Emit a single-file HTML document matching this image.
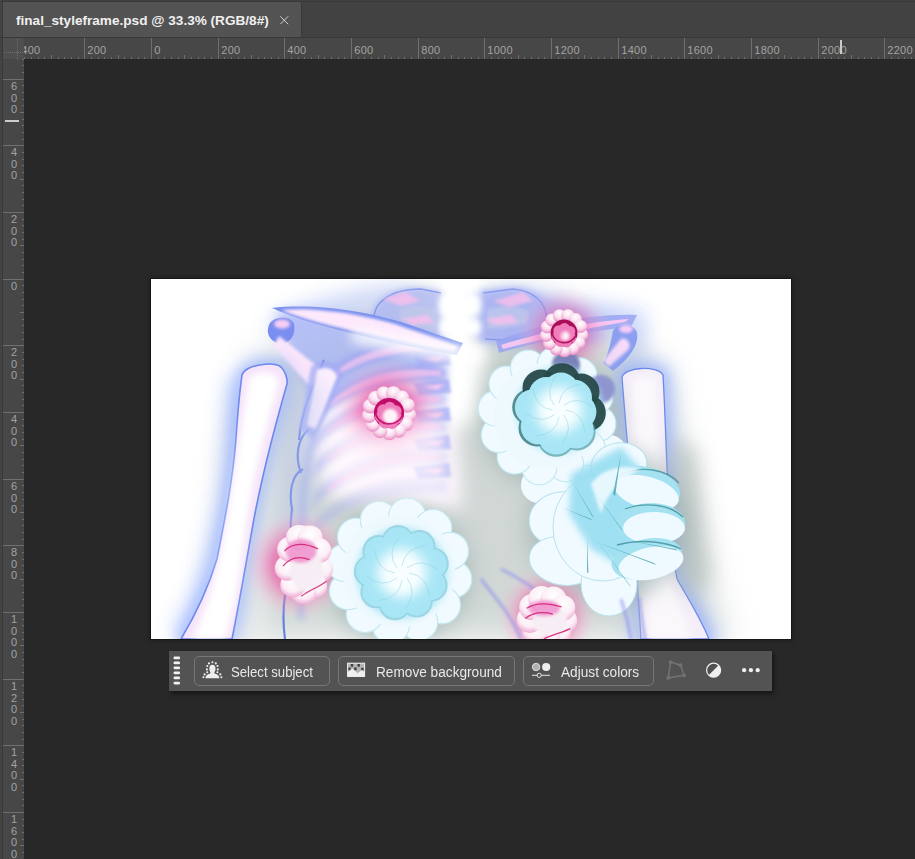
<!DOCTYPE html>
<html><head><meta charset="utf-8">
<style>
html,body{margin:0;padding:0;}
body{width:915px;height:859px;overflow:hidden;background:#282828;position:relative;font-family:"Liberation Sans",sans-serif;}
.abs{position:absolute;}
#topbar{left:0;top:0;width:915px;height:38px;background:#424242;}
#tab{left:3px;top:2px;width:298px;height:35px;background:#535353;}
#tabtitle{left:16px;top:10.5px;color:#f0f0f0;font-weight:bold;font-size:13.6px;line-height:20px;white-space:nowrap;}
#rul{left:0;top:0;}
#img{left:151px;top:279px;width:640px;height:360px;background:#fff;overflow:hidden;}
#imgborder{left:150px;top:278px;width:642px;height:362px;background:#161616;box-shadow:0 0 6px rgba(0,0,0,0.35);}
#tb{left:169px;top:651px;width:603px;height:40px;background:#535353;box-shadow:2px 3px 4px rgba(0,0,0,0.45);}
.btn{position:absolute;top:5px;height:28px;border:1px solid #767676;border-radius:5px;box-sizing:content-box;}
.btxt{position:absolute;top:6px;color:#e8e8e8;font-size:14px;line-height:16px;white-space:nowrap;transform-origin:0 0;}
</style></head><body>
<div id="topbar" class="abs"></div>
<div class="abs" style="left:0;top:1px;width:915px;height:1px;background:#393939"></div>
<div class="abs" style="left:0;top:0;width:2px;height:859px;background:#434343"></div>
<div class="abs" style="left:2px;top:0;width:1px;height:859px;background:#393939"></div>
<div id="tab" class="abs"></div>
<div class="abs" style="left:301px;top:2px;width:1px;height:35px;background:#3a3a3a"></div>
<div class="abs" style="left:0;top:37px;width:915px;height:1px;background:#393939"></div>
<div id="tabtitle" class="abs">final_styleframe.psd @ 33.3% (RGB/8#)</div>
<svg class="abs" style="left:0;top:0" width="915" height="859">
<line x1="280.3" y1="16.3" x2="288.2" y2="24.2" stroke="#d0d0d0" stroke-width="1"/>
<line x1="288.2" y1="16.3" x2="280.3" y2="24.2" stroke="#d0d0d0" stroke-width="1"/>
<rect x="3" y="38" width="912" height="21" fill="#474747"/>
<rect x="3" y="59" width="21" height="800" fill="#474747"/>
<g font-family="Liberation Sans" font-size="11px">
<rect x="24" y="57" width="1" height="2" fill="#6f6f6f"/>
<rect x="31" y="57" width="1" height="2" fill="#6f6f6f"/>
<rect x="38" y="57" width="1" height="2" fill="#6f6f6f"/>
<rect x="44" y="57" width="1" height="2" fill="#6f6f6f"/>
<rect x="51" y="55" width="1" height="4" fill="#6f6f6f"/>
<rect x="58" y="57" width="1" height="2" fill="#6f6f6f"/>
<rect x="64" y="57" width="1" height="2" fill="#6f6f6f"/>
<rect x="71" y="57" width="1" height="2" fill="#6f6f6f"/>
<rect x="78" y="57" width="1" height="2" fill="#6f6f6f"/>
<rect x="84" y="38" width="1" height="21" fill="#6f6f6f"/>
<rect x="91" y="57" width="1" height="2" fill="#6f6f6f"/>
<rect x="98" y="57" width="1" height="2" fill="#6f6f6f"/>
<rect x="104" y="57" width="1" height="2" fill="#6f6f6f"/>
<rect x="111" y="57" width="1" height="2" fill="#6f6f6f"/>
<rect x="118" y="55" width="1" height="4" fill="#6f6f6f"/>
<rect x="124" y="57" width="1" height="2" fill="#6f6f6f"/>
<rect x="131" y="57" width="1" height="2" fill="#6f6f6f"/>
<rect x="138" y="57" width="1" height="2" fill="#6f6f6f"/>
<rect x="144" y="57" width="1" height="2" fill="#6f6f6f"/>
<rect x="151" y="38" width="1" height="21" fill="#6f6f6f"/>
<rect x="158" y="57" width="1" height="2" fill="#6f6f6f"/>
<rect x="164" y="57" width="1" height="2" fill="#6f6f6f"/>
<rect x="171" y="57" width="1" height="2" fill="#6f6f6f"/>
<rect x="178" y="57" width="1" height="2" fill="#6f6f6f"/>
<rect x="184" y="55" width="1" height="4" fill="#6f6f6f"/>
<rect x="191" y="57" width="1" height="2" fill="#6f6f6f"/>
<rect x="198" y="57" width="1" height="2" fill="#6f6f6f"/>
<rect x="204" y="57" width="1" height="2" fill="#6f6f6f"/>
<rect x="211" y="57" width="1" height="2" fill="#6f6f6f"/>
<rect x="218" y="38" width="1" height="21" fill="#6f6f6f"/>
<rect x="224" y="57" width="1" height="2" fill="#6f6f6f"/>
<rect x="231" y="57" width="1" height="2" fill="#6f6f6f"/>
<rect x="238" y="57" width="1" height="2" fill="#6f6f6f"/>
<rect x="244" y="57" width="1" height="2" fill="#6f6f6f"/>
<rect x="251" y="55" width="1" height="4" fill="#6f6f6f"/>
<rect x="258" y="57" width="1" height="2" fill="#6f6f6f"/>
<rect x="264" y="57" width="1" height="2" fill="#6f6f6f"/>
<rect x="271" y="57" width="1" height="2" fill="#6f6f6f"/>
<rect x="278" y="57" width="1" height="2" fill="#6f6f6f"/>
<rect x="284" y="38" width="1" height="21" fill="#6f6f6f"/>
<rect x="291" y="57" width="1" height="2" fill="#6f6f6f"/>
<rect x="298" y="57" width="1" height="2" fill="#6f6f6f"/>
<rect x="304" y="57" width="1" height="2" fill="#6f6f6f"/>
<rect x="311" y="57" width="1" height="2" fill="#6f6f6f"/>
<rect x="318" y="55" width="1" height="4" fill="#6f6f6f"/>
<rect x="324" y="57" width="1" height="2" fill="#6f6f6f"/>
<rect x="331" y="57" width="1" height="2" fill="#6f6f6f"/>
<rect x="338" y="57" width="1" height="2" fill="#6f6f6f"/>
<rect x="344" y="57" width="1" height="2" fill="#6f6f6f"/>
<rect x="351" y="38" width="1" height="21" fill="#6f6f6f"/>
<rect x="358" y="57" width="1" height="2" fill="#6f6f6f"/>
<rect x="364" y="57" width="1" height="2" fill="#6f6f6f"/>
<rect x="371" y="57" width="1" height="2" fill="#6f6f6f"/>
<rect x="378" y="57" width="1" height="2" fill="#6f6f6f"/>
<rect x="384" y="55" width="1" height="4" fill="#6f6f6f"/>
<rect x="391" y="57" width="1" height="2" fill="#6f6f6f"/>
<rect x="398" y="57" width="1" height="2" fill="#6f6f6f"/>
<rect x="404" y="57" width="1" height="2" fill="#6f6f6f"/>
<rect x="411" y="57" width="1" height="2" fill="#6f6f6f"/>
<rect x="418" y="38" width="1" height="21" fill="#6f6f6f"/>
<rect x="424" y="57" width="1" height="2" fill="#6f6f6f"/>
<rect x="431" y="57" width="1" height="2" fill="#6f6f6f"/>
<rect x="438" y="57" width="1" height="2" fill="#6f6f6f"/>
<rect x="444" y="57" width="1" height="2" fill="#6f6f6f"/>
<rect x="451" y="55" width="1" height="4" fill="#6f6f6f"/>
<rect x="458" y="57" width="1" height="2" fill="#6f6f6f"/>
<rect x="464" y="57" width="1" height="2" fill="#6f6f6f"/>
<rect x="471" y="57" width="1" height="2" fill="#6f6f6f"/>
<rect x="478" y="57" width="1" height="2" fill="#6f6f6f"/>
<rect x="484" y="38" width="1" height="21" fill="#6f6f6f"/>
<rect x="491" y="57" width="1" height="2" fill="#6f6f6f"/>
<rect x="498" y="57" width="1" height="2" fill="#6f6f6f"/>
<rect x="504" y="57" width="1" height="2" fill="#6f6f6f"/>
<rect x="511" y="57" width="1" height="2" fill="#6f6f6f"/>
<rect x="518" y="55" width="1" height="4" fill="#6f6f6f"/>
<rect x="524" y="57" width="1" height="2" fill="#6f6f6f"/>
<rect x="531" y="57" width="1" height="2" fill="#6f6f6f"/>
<rect x="538" y="57" width="1" height="2" fill="#6f6f6f"/>
<rect x="544" y="57" width="1" height="2" fill="#6f6f6f"/>
<rect x="551" y="38" width="1" height="21" fill="#6f6f6f"/>
<rect x="558" y="57" width="1" height="2" fill="#6f6f6f"/>
<rect x="564" y="57" width="1" height="2" fill="#6f6f6f"/>
<rect x="571" y="57" width="1" height="2" fill="#6f6f6f"/>
<rect x="578" y="57" width="1" height="2" fill="#6f6f6f"/>
<rect x="584" y="55" width="1" height="4" fill="#6f6f6f"/>
<rect x="591" y="57" width="1" height="2" fill="#6f6f6f"/>
<rect x="598" y="57" width="1" height="2" fill="#6f6f6f"/>
<rect x="604" y="57" width="1" height="2" fill="#6f6f6f"/>
<rect x="611" y="57" width="1" height="2" fill="#6f6f6f"/>
<rect x="618" y="38" width="1" height="21" fill="#6f6f6f"/>
<rect x="624" y="57" width="1" height="2" fill="#6f6f6f"/>
<rect x="631" y="57" width="1" height="2" fill="#6f6f6f"/>
<rect x="638" y="57" width="1" height="2" fill="#6f6f6f"/>
<rect x="644" y="57" width="1" height="2" fill="#6f6f6f"/>
<rect x="651" y="55" width="1" height="4" fill="#6f6f6f"/>
<rect x="658" y="57" width="1" height="2" fill="#6f6f6f"/>
<rect x="664" y="57" width="1" height="2" fill="#6f6f6f"/>
<rect x="671" y="57" width="1" height="2" fill="#6f6f6f"/>
<rect x="678" y="57" width="1" height="2" fill="#6f6f6f"/>
<rect x="684" y="38" width="1" height="21" fill="#6f6f6f"/>
<rect x="691" y="57" width="1" height="2" fill="#6f6f6f"/>
<rect x="698" y="57" width="1" height="2" fill="#6f6f6f"/>
<rect x="704" y="57" width="1" height="2" fill="#6f6f6f"/>
<rect x="711" y="57" width="1" height="2" fill="#6f6f6f"/>
<rect x="718" y="55" width="1" height="4" fill="#6f6f6f"/>
<rect x="724" y="57" width="1" height="2" fill="#6f6f6f"/>
<rect x="731" y="57" width="1" height="2" fill="#6f6f6f"/>
<rect x="738" y="57" width="1" height="2" fill="#6f6f6f"/>
<rect x="744" y="57" width="1" height="2" fill="#6f6f6f"/>
<rect x="751" y="38" width="1" height="21" fill="#6f6f6f"/>
<rect x="758" y="57" width="1" height="2" fill="#6f6f6f"/>
<rect x="764" y="57" width="1" height="2" fill="#6f6f6f"/>
<rect x="771" y="57" width="1" height="2" fill="#6f6f6f"/>
<rect x="778" y="57" width="1" height="2" fill="#6f6f6f"/>
<rect x="784" y="55" width="1" height="4" fill="#6f6f6f"/>
<rect x="791" y="57" width="1" height="2" fill="#6f6f6f"/>
<rect x="798" y="57" width="1" height="2" fill="#6f6f6f"/>
<rect x="804" y="57" width="1" height="2" fill="#6f6f6f"/>
<rect x="811" y="57" width="1" height="2" fill="#6f6f6f"/>
<rect x="818" y="38" width="1" height="21" fill="#6f6f6f"/>
<rect x="824" y="57" width="1" height="2" fill="#6f6f6f"/>
<rect x="831" y="57" width="1" height="2" fill="#6f6f6f"/>
<rect x="838" y="57" width="1" height="2" fill="#6f6f6f"/>
<rect x="844" y="57" width="1" height="2" fill="#6f6f6f"/>
<rect x="851" y="55" width="1" height="4" fill="#6f6f6f"/>
<rect x="858" y="57" width="1" height="2" fill="#6f6f6f"/>
<rect x="864" y="57" width="1" height="2" fill="#6f6f6f"/>
<rect x="871" y="57" width="1" height="2" fill="#6f6f6f"/>
<rect x="878" y="57" width="1" height="2" fill="#6f6f6f"/>
<rect x="884" y="38" width="1" height="21" fill="#6f6f6f"/>
<rect x="891" y="57" width="1" height="2" fill="#6f6f6f"/>
<rect x="898" y="57" width="1" height="2" fill="#6f6f6f"/>
<rect x="904" y="57" width="1" height="2" fill="#6f6f6f"/>
<rect x="911" y="57" width="1" height="2" fill="#6f6f6f"/>
<text x="-112.8" y="54" fill="#a3a3a3" letter-spacing="0.35">800</text>
<text x="-45.8" y="54" fill="#a3a3a3" letter-spacing="0.35">600</text>
<text x="21.2" y="54" fill="#a3a3a3" letter-spacing="0.35">400</text>
<text x="87.2" y="54" fill="#a3a3a3" letter-spacing="0.35">200</text>
<text x="154.2" y="54" fill="#a3a3a3" letter-spacing="0.35">0</text>
<text x="221.2" y="54" fill="#a3a3a3" letter-spacing="0.35">200</text>
<text x="287.2" y="54" fill="#a3a3a3" letter-spacing="0.35">400</text>
<text x="354.2" y="54" fill="#a3a3a3" letter-spacing="0.35">600</text>
<text x="421.2" y="54" fill="#a3a3a3" letter-spacing="0.35">800</text>
<text x="487.2" y="54" fill="#a3a3a3" letter-spacing="0.35">1000</text>
<text x="554.2" y="54" fill="#a3a3a3" letter-spacing="0.35">1200</text>
<text x="621.2" y="54" fill="#a3a3a3" letter-spacing="0.35">1400</text>
<text x="687.2" y="54" fill="#a3a3a3" letter-spacing="0.35">1600</text>
<text x="754.2" y="54" fill="#a3a3a3" letter-spacing="0.35">1800</text>
<text x="821.2" y="54" fill="#a3a3a3" letter-spacing="0.35">2000</text>
<text x="887.2" y="54" fill="#a3a3a3" letter-spacing="0.35">2200</text>
<rect x="3" y="38" width="21" height="21" fill="#474747"/>

<rect x="3" y="38" width="21" height="21" fill="#4f4f4f"/>
<rect x="4" y="52" width="1" height="1" fill="#6e6e6e"/><rect x="17" y="39" width="1" height="1" fill="#6e6e6e"/><rect x="6" y="52" width="1" height="1" fill="#6e6e6e"/><rect x="17" y="41" width="1" height="1" fill="#6e6e6e"/><rect x="8" y="52" width="1" height="1" fill="#6e6e6e"/><rect x="17" y="43" width="1" height="1" fill="#6e6e6e"/><rect x="10" y="52" width="1" height="1" fill="#6e6e6e"/><rect x="17" y="45" width="1" height="1" fill="#6e6e6e"/><rect x="12" y="52" width="1" height="1" fill="#6e6e6e"/><rect x="17" y="47" width="1" height="1" fill="#6e6e6e"/><rect x="14" y="52" width="1" height="1" fill="#6e6e6e"/><rect x="17" y="49" width="1" height="1" fill="#6e6e6e"/><rect x="16" y="52" width="1" height="1" fill="#6e6e6e"/><rect x="17" y="51" width="1" height="1" fill="#6e6e6e"/><rect x="18" y="52" width="1" height="1" fill="#6e6e6e"/><rect x="17" y="53" width="1" height="1" fill="#6e6e6e"/><rect x="20" y="52" width="1" height="1" fill="#6e6e6e"/><rect x="17" y="55" width="1" height="1" fill="#6e6e6e"/><rect x="22" y="52" width="1" height="1" fill="#6e6e6e"/><rect x="17" y="57" width="1" height="1" fill="#6e6e6e"/><rect x="24" y="52" width="1" height="1" fill="#6e6e6e"/><rect x="17" y="59" width="1" height="1" fill="#6e6e6e"/>
<rect x="22" y="59" width="2" height="1" fill="#6f6f6f"/>
<rect x="22" y="65" width="2" height="1" fill="#6f6f6f"/>
<rect x="22" y="72" width="2" height="1" fill="#6f6f6f"/>
<rect x="3" y="79" width="21" height="1" fill="#6f6f6f"/>
<rect x="22" y="85" width="2" height="1" fill="#6f6f6f"/>
<rect x="22" y="92" width="2" height="1" fill="#6f6f6f"/>
<rect x="22" y="99" width="2" height="1" fill="#6f6f6f"/>
<rect x="22" y="105" width="2" height="1" fill="#6f6f6f"/>
<rect x="20" y="112" width="4" height="1" fill="#6f6f6f"/>
<rect x="22" y="119" width="2" height="1" fill="#6f6f6f"/>
<rect x="22" y="125" width="2" height="1" fill="#6f6f6f"/>
<rect x="22" y="132" width="2" height="1" fill="#6f6f6f"/>
<rect x="22" y="139" width="2" height="1" fill="#6f6f6f"/>
<rect x="3" y="145" width="21" height="1" fill="#6f6f6f"/>
<rect x="22" y="152" width="2" height="1" fill="#6f6f6f"/>
<rect x="22" y="159" width="2" height="1" fill="#6f6f6f"/>
<rect x="22" y="165" width="2" height="1" fill="#6f6f6f"/>
<rect x="22" y="172" width="2" height="1" fill="#6f6f6f"/>
<rect x="20" y="179" width="4" height="1" fill="#6f6f6f"/>
<rect x="22" y="185" width="2" height="1" fill="#6f6f6f"/>
<rect x="22" y="192" width="2" height="1" fill="#6f6f6f"/>
<rect x="22" y="199" width="2" height="1" fill="#6f6f6f"/>
<rect x="22" y="205" width="2" height="1" fill="#6f6f6f"/>
<rect x="3" y="212" width="21" height="1" fill="#6f6f6f"/>
<rect x="22" y="219" width="2" height="1" fill="#6f6f6f"/>
<rect x="22" y="225" width="2" height="1" fill="#6f6f6f"/>
<rect x="22" y="232" width="2" height="1" fill="#6f6f6f"/>
<rect x="22" y="239" width="2" height="1" fill="#6f6f6f"/>
<rect x="20" y="245" width="4" height="1" fill="#6f6f6f"/>
<rect x="22" y="252" width="2" height="1" fill="#6f6f6f"/>
<rect x="22" y="259" width="2" height="1" fill="#6f6f6f"/>
<rect x="22" y="265" width="2" height="1" fill="#6f6f6f"/>
<rect x="22" y="272" width="2" height="1" fill="#6f6f6f"/>
<rect x="3" y="279" width="21" height="1" fill="#6f6f6f"/>
<rect x="22" y="285" width="2" height="1" fill="#6f6f6f"/>
<rect x="22" y="292" width="2" height="1" fill="#6f6f6f"/>
<rect x="22" y="299" width="2" height="1" fill="#6f6f6f"/>
<rect x="22" y="305" width="2" height="1" fill="#6f6f6f"/>
<rect x="20" y="312" width="4" height="1" fill="#6f6f6f"/>
<rect x="22" y="319" width="2" height="1" fill="#6f6f6f"/>
<rect x="22" y="325" width="2" height="1" fill="#6f6f6f"/>
<rect x="22" y="332" width="2" height="1" fill="#6f6f6f"/>
<rect x="22" y="339" width="2" height="1" fill="#6f6f6f"/>
<rect x="3" y="345" width="21" height="1" fill="#6f6f6f"/>
<rect x="22" y="352" width="2" height="1" fill="#6f6f6f"/>
<rect x="22" y="359" width="2" height="1" fill="#6f6f6f"/>
<rect x="22" y="365" width="2" height="1" fill="#6f6f6f"/>
<rect x="22" y="372" width="2" height="1" fill="#6f6f6f"/>
<rect x="20" y="379" width="4" height="1" fill="#6f6f6f"/>
<rect x="22" y="385" width="2" height="1" fill="#6f6f6f"/>
<rect x="22" y="392" width="2" height="1" fill="#6f6f6f"/>
<rect x="22" y="399" width="2" height="1" fill="#6f6f6f"/>
<rect x="22" y="405" width="2" height="1" fill="#6f6f6f"/>
<rect x="3" y="412" width="21" height="1" fill="#6f6f6f"/>
<rect x="22" y="419" width="2" height="1" fill="#6f6f6f"/>
<rect x="22" y="425" width="2" height="1" fill="#6f6f6f"/>
<rect x="22" y="432" width="2" height="1" fill="#6f6f6f"/>
<rect x="22" y="439" width="2" height="1" fill="#6f6f6f"/>
<rect x="20" y="445" width="4" height="1" fill="#6f6f6f"/>
<rect x="22" y="452" width="2" height="1" fill="#6f6f6f"/>
<rect x="22" y="459" width="2" height="1" fill="#6f6f6f"/>
<rect x="22" y="465" width="2" height="1" fill="#6f6f6f"/>
<rect x="22" y="472" width="2" height="1" fill="#6f6f6f"/>
<rect x="3" y="479" width="21" height="1" fill="#6f6f6f"/>
<rect x="22" y="485" width="2" height="1" fill="#6f6f6f"/>
<rect x="22" y="492" width="2" height="1" fill="#6f6f6f"/>
<rect x="22" y="499" width="2" height="1" fill="#6f6f6f"/>
<rect x="22" y="505" width="2" height="1" fill="#6f6f6f"/>
<rect x="20" y="512" width="4" height="1" fill="#6f6f6f"/>
<rect x="22" y="519" width="2" height="1" fill="#6f6f6f"/>
<rect x="22" y="525" width="2" height="1" fill="#6f6f6f"/>
<rect x="22" y="532" width="2" height="1" fill="#6f6f6f"/>
<rect x="22" y="539" width="2" height="1" fill="#6f6f6f"/>
<rect x="3" y="545" width="21" height="1" fill="#6f6f6f"/>
<rect x="22" y="552" width="2" height="1" fill="#6f6f6f"/>
<rect x="22" y="559" width="2" height="1" fill="#6f6f6f"/>
<rect x="22" y="565" width="2" height="1" fill="#6f6f6f"/>
<rect x="22" y="572" width="2" height="1" fill="#6f6f6f"/>
<rect x="20" y="579" width="4" height="1" fill="#6f6f6f"/>
<rect x="22" y="585" width="2" height="1" fill="#6f6f6f"/>
<rect x="22" y="592" width="2" height="1" fill="#6f6f6f"/>
<rect x="22" y="599" width="2" height="1" fill="#6f6f6f"/>
<rect x="22" y="605" width="2" height="1" fill="#6f6f6f"/>
<rect x="3" y="612" width="21" height="1" fill="#6f6f6f"/>
<rect x="22" y="619" width="2" height="1" fill="#6f6f6f"/>
<rect x="22" y="625" width="2" height="1" fill="#6f6f6f"/>
<rect x="22" y="632" width="2" height="1" fill="#6f6f6f"/>
<rect x="22" y="639" width="2" height="1" fill="#6f6f6f"/>
<rect x="20" y="645" width="4" height="1" fill="#6f6f6f"/>
<rect x="22" y="652" width="2" height="1" fill="#6f6f6f"/>
<rect x="22" y="659" width="2" height="1" fill="#6f6f6f"/>
<rect x="22" y="665" width="2" height="1" fill="#6f6f6f"/>
<rect x="22" y="672" width="2" height="1" fill="#6f6f6f"/>
<rect x="3" y="679" width="21" height="1" fill="#6f6f6f"/>
<rect x="22" y="685" width="2" height="1" fill="#6f6f6f"/>
<rect x="22" y="692" width="2" height="1" fill="#6f6f6f"/>
<rect x="22" y="699" width="2" height="1" fill="#6f6f6f"/>
<rect x="22" y="705" width="2" height="1" fill="#6f6f6f"/>
<rect x="20" y="712" width="4" height="1" fill="#6f6f6f"/>
<rect x="22" y="719" width="2" height="1" fill="#6f6f6f"/>
<rect x="22" y="725" width="2" height="1" fill="#6f6f6f"/>
<rect x="22" y="732" width="2" height="1" fill="#6f6f6f"/>
<rect x="22" y="739" width="2" height="1" fill="#6f6f6f"/>
<rect x="3" y="745" width="21" height="1" fill="#6f6f6f"/>
<rect x="22" y="752" width="2" height="1" fill="#6f6f6f"/>
<rect x="22" y="759" width="2" height="1" fill="#6f6f6f"/>
<rect x="22" y="765" width="2" height="1" fill="#6f6f6f"/>
<rect x="22" y="772" width="2" height="1" fill="#6f6f6f"/>
<rect x="20" y="779" width="4" height="1" fill="#6f6f6f"/>
<rect x="22" y="785" width="2" height="1" fill="#6f6f6f"/>
<rect x="22" y="792" width="2" height="1" fill="#6f6f6f"/>
<rect x="22" y="799" width="2" height="1" fill="#6f6f6f"/>
<rect x="22" y="805" width="2" height="1" fill="#6f6f6f"/>
<rect x="3" y="812" width="21" height="1" fill="#6f6f6f"/>
<rect x="22" y="819" width="2" height="1" fill="#6f6f6f"/>
<rect x="22" y="825" width="2" height="1" fill="#6f6f6f"/>
<rect x="22" y="832" width="2" height="1" fill="#6f6f6f"/>
<rect x="22" y="839" width="2" height="1" fill="#6f6f6f"/>
<rect x="20" y="845" width="4" height="1" fill="#6f6f6f"/>
<rect x="22" y="852" width="2" height="1" fill="#6f6f6f"/>
<rect x="22" y="859" width="2" height="1" fill="#6f6f6f"/>
<text x="14" y="90.0" fill="#a3a3a3" text-anchor="middle">6</text>
<text x="14" y="101.6" fill="#a3a3a3" text-anchor="middle">0</text>
<text x="14" y="113.2" fill="#a3a3a3" text-anchor="middle">0</text>
<text x="14" y="156.0" fill="#a3a3a3" text-anchor="middle">4</text>
<text x="14" y="167.6" fill="#a3a3a3" text-anchor="middle">0</text>
<text x="14" y="179.2" fill="#a3a3a3" text-anchor="middle">0</text>
<text x="14" y="223.0" fill="#a3a3a3" text-anchor="middle">2</text>
<text x="14" y="234.6" fill="#a3a3a3" text-anchor="middle">0</text>
<text x="14" y="246.2" fill="#a3a3a3" text-anchor="middle">0</text>
<text x="14" y="290.0" fill="#a3a3a3" text-anchor="middle">0</text>
<text x="14" y="356.0" fill="#a3a3a3" text-anchor="middle">2</text>
<text x="14" y="367.6" fill="#a3a3a3" text-anchor="middle">0</text>
<text x="14" y="379.2" fill="#a3a3a3" text-anchor="middle">0</text>
<text x="14" y="423.0" fill="#a3a3a3" text-anchor="middle">4</text>
<text x="14" y="434.6" fill="#a3a3a3" text-anchor="middle">0</text>
<text x="14" y="446.2" fill="#a3a3a3" text-anchor="middle">0</text>
<text x="14" y="490.0" fill="#a3a3a3" text-anchor="middle">6</text>
<text x="14" y="501.6" fill="#a3a3a3" text-anchor="middle">0</text>
<text x="14" y="513.2" fill="#a3a3a3" text-anchor="middle">0</text>
<text x="14" y="556.0" fill="#a3a3a3" text-anchor="middle">8</text>
<text x="14" y="567.6" fill="#a3a3a3" text-anchor="middle">0</text>
<text x="14" y="579.2" fill="#a3a3a3" text-anchor="middle">0</text>
<text x="14" y="623.0" fill="#a3a3a3" text-anchor="middle">1</text>
<text x="14" y="634.6" fill="#a3a3a3" text-anchor="middle">0</text>
<text x="14" y="646.2" fill="#a3a3a3" text-anchor="middle">0</text>
<text x="14" y="657.8" fill="#a3a3a3" text-anchor="middle">0</text>
<text x="14" y="690.0" fill="#a3a3a3" text-anchor="middle">1</text>
<text x="14" y="701.6" fill="#a3a3a3" text-anchor="middle">2</text>
<text x="14" y="713.2" fill="#a3a3a3" text-anchor="middle">0</text>
<text x="14" y="724.8" fill="#a3a3a3" text-anchor="middle">0</text>
<text x="14" y="756.0" fill="#a3a3a3" text-anchor="middle">1</text>
<text x="14" y="767.6" fill="#a3a3a3" text-anchor="middle">4</text>
<text x="14" y="779.2" fill="#a3a3a3" text-anchor="middle">0</text>
<text x="14" y="790.8" fill="#a3a3a3" text-anchor="middle">0</text>
<text x="14" y="823.0" fill="#a3a3a3" text-anchor="middle">1</text>
<text x="14" y="834.6" fill="#a3a3a3" text-anchor="middle">6</text>
<text x="14" y="846.2" fill="#a3a3a3" text-anchor="middle">0</text>
<text x="14" y="857.8" fill="#a3a3a3" text-anchor="middle">0</text>
<text x="14" y="890.0" fill="#a3a3a3" text-anchor="middle">1</text>
<text x="14" y="901.6" fill="#a3a3a3" text-anchor="middle">8</text>
<text x="14" y="913.2" fill="#a3a3a3" text-anchor="middle">0</text>
<text x="14" y="924.8" fill="#a3a3a3" text-anchor="middle">0</text>
</g>
<rect x="840" y="40" width="2" height="14" fill="#cacaca"/>
<rect x="5" y="120" width="14" height="2" fill="#cccccc"/>
</svg>
<div id="imgborder" class="abs"></div>
<div id="img" class="abs"><svg width="640" height="360" viewBox="0 0 640 360">
<defs>
<filter id="b30" x="-50%" y="-50%" width="200%" height="200%"><feGaussianBlur stdDeviation="18"/></filter>
<filter id="b12" x="-50%" y="-50%" width="200%" height="200%"><feGaussianBlur stdDeviation="10"/></filter>
<filter id="b6" x="-50%" y="-50%" width="200%" height="200%"><feGaussianBlur stdDeviation="6"/></filter>
<filter id="b3" x="-50%" y="-50%" width="200%" height="200%"><feGaussianBlur stdDeviation="3"/></filter>
<filter id="b2" x="-50%" y="-50%" width="200%" height="200%"><feGaussianBlur stdDeviation="1.6"/></filter>
<filter id="b1" x="-50%" y="-50%" width="200%" height="200%"><feGaussianBlur stdDeviation="0.6"/></filter>
<radialGradient id="gPinkGlow" cx="50%" cy="50%" r="50%">
<stop offset="0" stop-color="#e8207e" stop-opacity="1"/>
<stop offset="0.5" stop-color="#f060a8" stop-opacity="0.75"/>
<stop offset="0.8" stop-color="#f8a0cc" stop-opacity="0.3"/>
<stop offset="1" stop-color="#ffc0e0" stop-opacity="0"/>
</radialGradient>
<radialGradient id="flC" cx="50%" cy="50%" r="50%">
<stop offset="0" stop-color="#f6fdff"/>
<stop offset="0.3" stop-color="#eefaff"/>
<stop offset="0.5" stop-color="#bfeaf6"/>
<stop offset="0.7" stop-color="#a6e2f2"/>
<stop offset="1" stop-color="#c8eef8"/>
</radialGradient>
<radialGradient id="petalP" cx="50%" cy="30%" r="75%">
<stop offset="0" stop-color="#ffffff"/>
<stop offset="0.5" stop-color="#fadcee"/>
<stop offset="1" stop-color="#e47cba"/>
</radialGradient>
<radialGradient id="petalW2" cx="50%" cy="35%" r="70%">
<stop offset="0" stop-color="#ffffff"/>
<stop offset="0.6" stop-color="#fbeef6"/>
<stop offset="1" stop-color="#ec9ccc"/>
</radialGradient>
<radialGradient id="centerP" cx="50%" cy="50%" r="50%">
<stop offset="0" stop-color="#fff4fa"/>
<stop offset="0.3" stop-color="#f7a8d0"/>
<stop offset="0.7" stop-color="#c81870"/>
<stop offset="1" stop-color="#e870a8"/>
</radialGradient>
</defs>
<rect width="640" height="360" fill="#ffffff"/>
<g filter="url(#b30)" fill="#b4c0bc" opacity="0.62">
<path d="M70 360 L86 150 L115 80 L200 30 L300 10 L400 22 L470 55 L512 100 L538 230 L562 330 L578 360 Z"/>
</g>
<g filter="url(#b12)">
<path d="M165 110 L300 90 L312 230 L240 228 L175 215 L158 170 Z" fill="#fdf6fd"/>
<path d="M284 -10 L332 -10 L330 140 L305 150 L286 140 Z" fill="#ffffff"/>
<path d="M60 0 L640 0 L640 14 L440 22 L330 6 L270 10 L120 30 L60 30 Z" fill="#ffffff" opacity="0.6"/>
<path d="M95 95 L135 95 L118 360 L40 360 Z" fill="#ffffff" opacity="0.4"/>
</g>
<g filter="url(#b12)" fill="none" stroke="#8aa4ff" stroke-width="16" opacity="0.45">
<path d="M122 50 C150 32 210 18 260 16"/>
<path d="M350 18 C400 22 455 35 482 60"/>
</g>
<g filter="url(#b6)" opacity="0.8">
<path d="M125 35 C170 28 230 35 290 55 L292 105 C250 100 200 110 170 130 C150 110 135 70 125 35 Z" fill="#a8b6f6"/>
<path d="M320 15 C360 10 410 20 440 36 L455 60 L420 72 C380 70 350 65 325 60 Z" fill="#a0aef2"/>
</g>
<g filter="url(#b12)" fill="none" stroke="#8aa6ff" stroke-width="12" opacity="0.45"><path d="M440 34 L486 36 L488 60 L470 84"/></g>
<g filter="url(#b3)" opacity="0.75">
<path d="M222 50 C214 26 236 8 270 8 L292 12 L290 60 L285 70 C256 68 230 64 222 50 Z" fill="#aab4f2"/>
<path d="M330 12 L364 8 C392 10 404 30 398 52 C386 62 360 64 330 62 Z" fill="#aab4f2"/>
</g>
<g filter="url(#b1)" fill="none" stroke="#7c90ee" stroke-width="1.6" opacity="0.8">
<path d="M284 68 C256 66 230 62 224 48 C218 25 238 10 270 10 L290 14"/>
<path d="M332 14 L362 10 C388 12 400 30 394 50 C382 60 360 62 334 60"/>
</g>
<g filter="url(#b2)" opacity="0.6">
<path d="M248 32 C255 26 272 26 286 30 L284 52 C270 50 255 46 248 40 Z" fill="#c4cce8"/>
<path d="M336 30 C350 26 368 26 378 32 L376 44 C364 48 350 50 336 50 Z" fill="#c4cce8"/>
</g>
<g filter="url(#b2)" opacity="0.85">
<path d="M232 20 L254 13 L270 22 L250 27 Z" fill="#f4c0ec"/>
<path d="M342 22 L372 13 L382 22 L358 28 Z" fill="#f4c0ec"/>
<path d="M250 40 L276 36 L284 44 L262 46 Z" fill="#f4c0ec"/>
<path d="M334 40 L360 36 L368 44 L344 46 Z" fill="#f4c0ec"/>
</g>
<g filter="url(#b3)" fill="#ffffff">
<rect x="290" y="-8" width="38" height="20" rx="6"/>
<rect x="288" y="15" width="42" height="22" rx="7"/>
<rect x="288" y="40" width="42" height="16" rx="6"/>
</g>
<g filter="url(#b3)">
<path d="M296 62 C250 54 200 67 165 102 L160 120 C190 88 240 72 296 76 Z" fill="#9ca2f0" opacity="0.7"/>
<path d="M296 88 C250 80 200 93 165 128 L160 146 C190 114 240 98 296 102 Z" fill="#9ca2f0" opacity="0.65"/>
<path d="M296 114 C250 106 200 119 165 154 L160 172 C190 140 240 124 296 128 Z" fill="#9ca2f0" opacity="0.5"/>
<path d="M296 142 C250 134 200 147 165 182 L160 200 C190 168 240 152 296 156 Z" fill="#9ca2f0" opacity="0.45"/>
<path d="M296 172 C250 164 200 177 165 212 L160 230 C190 198 240 182 296 186 Z" fill="#9ca2f0" opacity="0.4"/>
<path d="M296 200 C250 192 200 205 165 240 L160 258 C190 226 240 210 296 214 Z" fill="#9ca2f0" opacity="0.35"/>
</g>
<g filter="url(#b2)" opacity="0.75">
<path d="M290 66 C250 60 205 72 178 98 L176 104 C205 80 250 70 290 71 Z" fill="#f6c6f0"/>
<path d="M290 92 C250 86 205 98 178 124 L176 130 C205 106 250 96 290 97 Z" fill="#f6c6f0"/>
<path d="M290 118 C250 112 205 124 178 150 L176 156 C205 132 250 122 290 123 Z" fill="#f6c6f0"/>
<path d="M290 146 C250 140 205 152 178 178 L176 184 C205 160 250 150 290 151 Z" fill="#f6c6f0"/>
<path d="M290 176 C250 170 205 182 178 208 L176 214 C205 190 250 180 290 181 Z" fill="#f6c6f0"/>
</g>
<g filter="url(#b2)" opacity="0.8">
<path d="M262 76 L298 72 L300 86 L268 88 Z" fill="#a0a6f2"/>
<path d="M272 79 L294 77 L286 83 Z" fill="#f4c0ec"/>
<path d="M262 104 L298 100 L300 114 L268 116 Z" fill="#a0a6f2"/>
<path d="M272 107 L294 105 L286 111 Z" fill="#f4c0ec"/>
<path d="M262 132 L298 128 L300 142 L268 144 Z" fill="#a0a6f2"/>
<path d="M272 135 L294 133 L286 139 Z" fill="#f4c0ec"/>
<path d="M262 160 L298 156 L300 170 L268 172 Z" fill="#a0a6f2"/>
<path d="M272 163 L294 161 L286 167 Z" fill="#f4c0ec"/>
<path d="M262 188 L298 184 L300 198 L268 200 Z" fill="#a0a6f2"/>
<path d="M272 191 L294 189 L286 195 Z" fill="#f4c0ec"/>
</g>
<g filter="url(#b1)" fill="none" stroke="#5c78e0" stroke-width="2.2" opacity="0.9">
<path d="M173 81 C160 110 150 135 148 161"/>
<path d="M158 150 C146 160 144 178 150 194"/>
<path d="M152 190 C140 196 138 215 141 230 C138 250 140 270 145 290"/>
<path d="M146 280 C134 300 130 330 134 360"/>
</g>
<g filter="url(#b3)" fill="none" stroke="#8c9cf0" stroke-width="6" opacity="0.5">
<path d="M180 100 C165 140 155 180 152 220 C150 260 150 300 150 340"/>
</g>
<g filter="url(#b1)">
<path d="M121 29 C160 24 220 32 262 47 C282 54 300 60 312 64 L306 76 C280 72 240 64 200 54 C168 46 140 38 121 29 Z" fill="#7890ee"/>
</g>
<g filter="url(#b2)">
<path d="M130 31 C165 28 220 36 258 50 C278 57 296 63 308 68 L303 72 C276 68 238 60 198 51 C168 44 146 38 130 31 Z" fill="#fde8fc"/>
</g>
<g filter="url(#b6)" fill="#ffffff" opacity="0.9"><path d="M200 50 C240 56 290 62 335 70 L330 86 C280 80 230 70 200 62 Z"/></g>
<g filter="url(#b1)">
<path d="M345 62 C390 46 440 34 486 36 L480 48 C435 52 390 62 348 74 Z" fill="#9aa4f2" opacity="0.85"/>
<path d="M350 66 C392 53 440 42 478 40 L474 43 C435 49 392 60 352 70 Z" fill="#f6c8f4"/>
</g>
<g filter="url(#b1)">
<path d="M462 52 C466 44 484 44 486 54 C488 66 478 80 462 92 L452 84 C458 74 460 62 462 52 Z" fill="#8c9ef0"/>
</g><g filter="url(#b2)">
<ellipse cx="475" cy="50" rx="7" ry="4" fill="#f6cdf6"/>
<path d="M470 60 C476 58 480 64 478 70 L458 88 L452 82 Z" fill="#f8dcf8"/>
</g>
<g filter="url(#b1)">
<path d="M118 46 C121 37 140 36 143 45 C145 56 140 63 131 65 C121 64 114 56 118 46 Z" fill="#7a8ef0"/>
</g><g filter="url(#b2)">
<ellipse cx="131" cy="45" rx="8" ry="4.5" fill="#f6cdf6"/>
<path d="M128 57 L172 92 L160 108 L122 68 Z" fill="#fbe6fb"/>
</g>
<g filter="url(#b2)" opacity="0.75"><path d="M160 88 C172 76 188 82 192 96 C182 120 170 150 162 160 L148 150 Z" fill="#a4acf4"/></g>
<g filter="url(#b2)"><path d="M166 92 C174 86 184 90 186 98 C178 116 170 140 164 150 L156 146 Z" fill="#fdf0fd"/></g>
<g filter="url(#b12)" opacity="0.4"><path d="M135 110 L175 100 L165 200 L150 300 L125 300 Z" fill="#b8c4f4"/></g>
<g filter="url(#b12)" fill="none" stroke="#86a4ff" stroke-width="20" opacity="0.6">
<path d="M88 98 C86 140 84 180 80 210 C70 270 55 320 30 360"/>
<path d="M92 92 C110 84 128 86 136 100" opacity="0.6"/>
<path d="M138 108 C126 140 112 190 102 245 C95 285 88 325 83 360" stroke-width="12" opacity="0.6"/>
</g>
<g filter="url(#b6)" fill="none" stroke="#8aa8ff" stroke-width="8" opacity="0.6">
<path d="M91 96 C94 86 122 82 130 88 C134 92 137 100 136 105 C126 140 112 190 102 245 C95 285 88 325 81 360 L30 360 C48 330 60 300 66 280 C74 240 82 200 85 160 C87 130 89 110 91 96 Z"/>
</g>
<g filter="url(#b1)">
<path d="M91 96 C94 86 122 82 130 88 C134 92 137 100 136 105 C126 140 112 190 102 245 C95 285 88 325 81 360 L30 360 C48 330 60 300 66 280 C74 240 82 200 85 160 C87 130 89 110 91 96 Z" fill="#f6e4fa" stroke="#6b88ee" stroke-width="1.6"/>
</g>
<g filter="url(#b3)">
<path d="M98 100 C104 92 120 92 126 98 C128 104 126 114 122 125 C112 160 102 200 96 240 C90 290 84 330 74 360 L42 360 C60 320 70 280 76 240 C84 190 92 140 98 100 Z" fill="#ffffff"/>
</g>
<g filter="url(#b12)" fill="none" stroke="#86a4ff" stroke-width="16" opacity="0.5">
<path d="M471 98 C474 88 506 86 512 96 C514 130 515 170 517 210 C519 250 522 280 526 300 C536 318 548 336 558 360 L490 360 C488 330 486 300 484 260 C480 200 474 140 471 98 Z"/>
</g>
<g filter="url(#b6)" fill="none" stroke="#8aa8ff" stroke-width="8" opacity="0.55">
<path d="M471 98 C474 88 506 86 512 96 C514 130 515 170 517 210 C519 250 522 280 526 300 C536 318 548 336 558 360 L490 360 C488 330 486 300 484 260 C480 200 474 140 471 98 Z"/>
</g>
<g filter="url(#b1)">
<path d="M471 98 C474 88 506 86 512 96 C514 130 515 170 517 210 C519 250 522 280 526 300 C536 318 548 336 558 360 L490 360 C488 330 486 300 484 260 C480 200 474 140 471 98 Z" fill="#f4eef8" stroke="#6b88ee" stroke-width="1.3"/>
</g>
<g filter="url(#b3)">
<path d="M480 104 C486 96 500 96 505 102 C508 150 508 220 512 290 C520 310 532 330 540 360 L498 360 C496 300 490 200 480 104 Z" fill="#fbf8fc"/>
<path d="M474 110 C478 160 484 220 488 290 L492 360 L486 360 C484 300 480 200 474 110 Z" fill="#c8d2d4" opacity="0.6"/>
</g>
<g filter="url(#b12)" fill="#a8b4b0" opacity="0.6"><path d="M520 160 L545 170 L560 300 L540 320 L525 290 Z"/></g>
<g filter="url(#b12)" fill="#98aeaa" opacity="0.6">
<circle cx="398" cy="140" r="70"/><circle cx="456" cy="246" r="80"/><circle cx="248" cy="294" r="72"/>
</g>
<circle cx="237" cy="134" r="55" fill="url(#gPinkGlow)" opacity="0.85"/>
<circle cx="413" cy="55" r="48" fill="url(#gPinkGlow)" opacity="0.6"/>
<circle cx="148" cy="286" r="55" fill="url(#gPinkGlow)" opacity="0.85"/>
<circle cx="396" cy="337" r="50" fill="url(#gPinkGlow)" opacity="0.8"/>
<g filter="url(#b1)" fill="#f0faff"><circle cx="420" cy="196" r="24"/><circle cx="458" cy="174" r="18"/><circle cx="388" cy="206" r="18"/></g>
<g filter="url(#b1)">
<circle cx="447.1" cy="144.7" r="17.7" fill="#f0faff" stroke="#c4e8f2" stroke-width="1.2" stroke-opacity="1"/><circle cx="436.4" cy="169.2" r="17.7" fill="#f0faff" stroke="#c4e8f2" stroke-width="1.2" stroke-opacity="1"/><circle cx="414.9" cy="185.1" r="17.7" fill="#f0faff" stroke="#c4e8f2" stroke-width="1.2" stroke-opacity="1"/><circle cx="388.3" cy="188.1" r="17.7" fill="#f0faff" stroke="#c4e8f2" stroke-width="1.2" stroke-opacity="1"/><circle cx="363.8" cy="177.4" r="17.7" fill="#f0faff" stroke="#c4e8f2" stroke-width="1.2" stroke-opacity="1"/><circle cx="347.9" cy="155.9" r="17.7" fill="#f0faff" stroke="#c4e8f2" stroke-width="1.2" stroke-opacity="1"/><circle cx="344.9" cy="129.3" r="17.7" fill="#f0faff" stroke="#c4e8f2" stroke-width="1.2" stroke-opacity="1"/><circle cx="355.6" cy="104.8" r="17.7" fill="#f0faff" stroke="#c4e8f2" stroke-width="1.2" stroke-opacity="1"/><circle cx="377.1" cy="88.9" r="17.7" fill="#f0faff" stroke="#c4e8f2" stroke-width="1.2" stroke-opacity="1"/><circle cx="403.7" cy="85.9" r="17.7" fill="#f0faff" stroke="#c4e8f2" stroke-width="1.2" stroke-opacity="1"/><circle cx="428.2" cy="96.6" r="17.7" fill="#f0faff" stroke="#c4e8f2" stroke-width="1.2" stroke-opacity="1"/><circle cx="444.1" cy="118.1" r="17.7" fill="#f0faff" stroke="#c4e8f2" stroke-width="1.2" stroke-opacity="1"/>
<circle cx="396" cy="137" r="53.04" fill="#eef9fe"/>
</g>
<g filter="url(#b2)">
<circle cx="415" cy="86" r="14" fill="#7a82b8"/>
<circle cx="450" cy="110" r="14" fill="#8e96d0"/>
</g>
<g filter="url(#b3)"><circle cx="408" cy="131" r="43.52" fill="#b2e8f6" opacity="0.95"/></g>
<g filter="url(#b1)">
<circle cx="436.4" cy="133.9" r="18.4" fill="#27494a" opacity="0.95"/>
<circle cx="426.1" cy="153.1" r="18.4" fill="#5aa0a8" opacity="0.75"/>
<circle cx="405.1" cy="159.4" r="18.4" fill="#5aa0a8" opacity="0.75"/>
<circle cx="385.9" cy="149.1" r="18.4" fill="#3c7c80" opacity="0.85"/>
<circle cx="379.6" cy="128.1" r="18.4" fill="#3c7c80" opacity="0.85"/>
<circle cx="389.9" cy="108.9" r="18.4" fill="#27494a" opacity="0.95"/>
<circle cx="410.9" cy="102.6" r="18.4" fill="#27494a" opacity="0.95"/>
<circle cx="430.1" cy="112.9" r="18.4" fill="#27494a" opacity="0.95"/>
<circle cx="427.5" cy="133.0" r="17.9" fill="#a8e6f6"/>
<circle cx="424.9" cy="151.7" r="17.9" fill="#a8e6f6"/>
<circle cx="405.3" cy="157.6" r="17.9" fill="#a8e6f6"/>
<circle cx="387.6" cy="147.7" r="17.9" fill="#a8e6f6"/>
<circle cx="381.8" cy="128.4" r="17.9" fill="#a8e6f6"/>
<circle cx="395.6" cy="115.9" r="17.9" fill="#a8e6f6"/>
<circle cx="410.0" cy="111.5" r="17.9" fill="#a8e6f6"/>
<circle cx="423.1" cy="118.6" r="17.9" fill="#a8e6f6"/>
</g>
<g filter="url(#b6)"><circle cx="408" cy="131" r="23.12" fill="#f8feff"/></g>
<g filter="url(#b1)" fill="none" stroke="#8fd0e0" stroke-width="1" opacity="0.5">
<path d="M414.8 131.0 Q431.7 133.4 434.0 152.9"/>
<path d="M412.8 135.8 Q423.1 149.4 410.9 164.9"/>
<path d="M408.0 137.8 Q405.6 154.7 386.1 157.0"/>
<path d="M403.2 135.8 Q389.6 146.1 374.1 133.9"/>
<path d="M401.2 131.0 Q384.3 128.6 382.0 109.1"/>
<path d="M403.2 126.2 Q392.9 112.6 405.1 97.1"/>
<path d="M408.0 124.2 Q410.4 107.3 429.9 105.0"/>
<path d="M412.8 126.2 Q426.4 115.9 441.9 128.1"/>
</g>
<g filter="url(#b1)">
<ellipse cx="410" cy="240" rx="32" ry="27" transform="rotate(-10 410 240)" fill="#f0faff" stroke="#b8e2ee" stroke-width="1"/>
<ellipse cx="412" cy="282" rx="34" ry="24" transform="rotate(10 412 282)" fill="#f0faff" stroke="#b8e2ee" stroke-width="1"/>
<ellipse cx="458" cy="305" rx="28" ry="32" transform="rotate(0 458 305)" fill="#f0faff" stroke="#b8e2ee" stroke-width="1"/>
<ellipse cx="452" cy="248" rx="50" ry="54" transform="rotate(0 452 248)" fill="#f0faff" stroke="#b8e2ee" stroke-width="1"/>
<ellipse cx="468" cy="186" rx="28" ry="22" transform="rotate(-10 468 186)" fill="#f0faff" stroke="#b8e2ee" stroke-width="1"/>
</g>
<g filter="url(#b3)" opacity="0.9"><path d="M420 195 L470 168 L498 200 L496 262 L474 290 L440 270 L418 235 Z" fill="#98def2"/></g>
<g filter="url(#b1)">
<ellipse cx="494" cy="208" rx="36" ry="20" transform="rotate(15 494 208)" fill="#a4e2f2"/>
<ellipse cx="497" cy="213" rx="33" ry="16" transform="rotate(15 494 208)" fill="#eefaff"/>
</g>
<g filter="url(#b1)">
<ellipse cx="500" cy="244" rx="34" ry="20" transform="rotate(0 500 244)" fill="#a4e2f2"/>
<ellipse cx="503" cy="249" rx="31" ry="16" transform="rotate(0 500 244)" fill="#eefaff"/>
</g>
<g filter="url(#b1)">
<ellipse cx="496" cy="280" rx="36" ry="20" transform="rotate(-12 496 280)" fill="#a4e2f2"/>
<ellipse cx="499" cy="285" rx="33" ry="16" transform="rotate(-12 496 280)" fill="#eefaff"/>
</g>
<g filter="url(#b1)" fill="none" stroke="#3f8e98" stroke-width="1.3" opacity="0.8">
<path d="M470 196 C490 186 515 190 528 204"/>
<path d="M474 230 C495 222 520 226 532 238"/>
<path d="M466 266 C488 260 514 262 530 270"/>
</g>
<g filter="url(#b2)" opacity="0.9">
<path d="M440 205 C450 190 470 185 490 190 C470 200 455 215 450 235 Z" fill="#eefaff"/>
</g>
<g filter="url(#b1)" fill="#47a2ae" opacity="0.8">
<path d="M421 202 L441 237 L443.1 239.1 Z"/>
<path d="M443 257 L478 306 L480.1 308.1 Z"/>
<path d="M443 262 L503 284 L505.1 286.1 Z"/>
<path d="M436 258 L436 293 L437.4 294.4 Z"/>
<path d="M445 215 L470 250 L472.8 252.8 Z"/>
<path d="M470 175 L462 215 L464.1 217.1 Z"/>
<path d="M480 262 L525 270 L526.4 271.4 Z"/>
<path d="M410 228 L440 240 L441.4 241.4 Z"/>
</g>
<g filter="url(#b1)">
<circle cx="302.1" cy="300.2" r="18.7" fill="#f0faff" stroke="#c4e8f2" stroke-width="1.2" stroke-opacity="1"/><circle cx="290.8" cy="326.1" r="18.7" fill="#f0faff" stroke="#c4e8f2" stroke-width="1.2" stroke-opacity="1"/><circle cx="268.0" cy="342.9" r="18.7" fill="#f0faff" stroke="#c4e8f2" stroke-width="1.2" stroke-opacity="1"/><circle cx="239.8" cy="346.1" r="18.7" fill="#f0faff" stroke="#c4e8f2" stroke-width="1.2" stroke-opacity="1"/><circle cx="213.9" cy="334.8" r="18.7" fill="#f0faff" stroke="#c4e8f2" stroke-width="1.2" stroke-opacity="1"/><circle cx="197.1" cy="312.0" r="18.7" fill="#f0faff" stroke="#c4e8f2" stroke-width="1.2" stroke-opacity="1"/><circle cx="193.9" cy="283.8" r="18.7" fill="#f0faff" stroke="#c4e8f2" stroke-width="1.2" stroke-opacity="1"/><circle cx="205.2" cy="257.9" r="18.7" fill="#f0faff" stroke="#c4e8f2" stroke-width="1.2" stroke-opacity="1"/><circle cx="228.0" cy="241.1" r="18.7" fill="#f0faff" stroke="#c4e8f2" stroke-width="1.2" stroke-opacity="1"/><circle cx="256.2" cy="237.9" r="18.7" fill="#f0faff" stroke="#c4e8f2" stroke-width="1.2" stroke-opacity="1"/><circle cx="282.1" cy="249.2" r="18.7" fill="#f0faff" stroke="#c4e8f2" stroke-width="1.2" stroke-opacity="1"/><circle cx="298.9" cy="272.0" r="18.7" fill="#f0faff" stroke="#c4e8f2" stroke-width="1.2" stroke-opacity="1"/>
<circle cx="248" cy="292" r="56.160000000000004" fill="#eef9fe"/>
</g>
<g filter="url(#b3)"><circle cx="251" cy="294" r="46.08" fill="#b2e8f6" opacity="0.95"/></g>
<g filter="url(#b1)">
<circle cx="280.8" cy="306.6" r="15.8" fill="#86cadc" opacity="0.7"/>
<circle cx="265.8" cy="322.8" r="15.8" fill="#86cadc" opacity="0.7"/>
<circle cx="243.8" cy="325.6" r="15.8" fill="#86cadc" opacity="0.7"/>
<circle cx="225.2" cy="313.5" r="15.8" fill="#86cadc" opacity="0.7"/>
<circle cx="218.6" cy="292.4" r="15.8" fill="#86cadc" opacity="0.7"/>
<circle cx="227.3" cy="271.9" r="15.8" fill="#86cadc" opacity="0.7"/>
<circle cx="247.0" cy="261.8" r="15.8" fill="#86cadc" opacity="0.7"/>
<circle cx="268.6" cy="266.8" r="15.8" fill="#86cadc" opacity="0.7"/>
<circle cx="282.0" cy="284.5" r="15.8" fill="#86cadc" opacity="0.7"/>
<circle cx="279.2" cy="305.9" r="15.3" fill="#a8e6f6"/>
<circle cx="264.9" cy="321.2" r="15.3" fill="#a8e6f6"/>
<circle cx="244.2" cy="323.8" r="15.3" fill="#a8e6f6"/>
<circle cx="226.6" cy="312.5" r="15.3" fill="#a8e6f6"/>
<circle cx="220.4" cy="292.4" r="15.3" fill="#a8e6f6"/>
<circle cx="228.6" cy="273.2" r="15.3" fill="#a8e6f6"/>
<circle cx="247.2" cy="263.6" r="15.3" fill="#a8e6f6"/>
<circle cx="267.6" cy="268.3" r="15.3" fill="#a8e6f6"/>
<circle cx="280.3" cy="285.0" r="15.3" fill="#a8e6f6"/>
</g>
<g filter="url(#b6)"><circle cx="251" cy="294" r="24.48" fill="#f8feff"/></g>
<g filter="url(#b1)" fill="none" stroke="#8fd0e0" stroke-width="1" opacity="0.5">
<path d="M258.2 294.0 Q276.1 296.5 278.5 317.2"/>
<path d="M256.1 299.1 Q267.0 313.5 254.1 329.9"/>
<path d="M251.0 301.2 Q248.5 319.1 227.8 321.5"/>
<path d="M245.9 299.1 Q231.5 310.0 215.1 297.1"/>
<path d="M243.8 294.0 Q225.9 291.5 223.5 270.8"/>
<path d="M245.9 288.9 Q235.0 274.5 247.9 258.1"/>
<path d="M251.0 286.8 Q253.5 268.9 274.2 266.5"/>
<path d="M256.1 288.9 Q270.5 278.0 286.9 290.9"/>
</g>
<g filter="url(#b2)" fill="none" stroke="#8c8ef0" stroke-width="3" opacity="0.6"><path d="M330 300 C345 320 360 335 370 360"/><path d="M350 290 C370 300 385 310 395 320"/><path d="M470 320 C475 335 478 348 480 360"/><path d="M488 318 C490 335 492 348 494 360"/></g>
<g filter="url(#b12)" fill="#fff8fd" opacity="0.7"><path d="M175 150 L290 140 L300 215 L185 215 Z"/></g>
<g filter="url(#b1)">
<circle cx="238" cy="134" r="21.6" fill="#f2b4d8"/>
<circle cx="257.9" cy="136.0" r="7.3" fill="url(#petalP)"/><circle cx="254.7" cy="145.0" r="7.3" fill="url(#petalP)"/><circle cx="247.7" cy="151.5" r="7.3" fill="url(#petalP)"/><circle cx="238.4" cy="154.0" r="7.3" fill="url(#petalP)"/><circle cx="229.1" cy="151.9" r="7.3" fill="url(#petalP)"/><circle cx="221.8" cy="145.7" r="7.3" fill="url(#petalP)"/><circle cx="218.2" cy="136.8" r="7.3" fill="url(#petalP)"/><circle cx="219.2" cy="127.3" r="7.3" fill="url(#petalP)"/><circle cx="224.4" cy="119.3" r="7.3" fill="url(#petalP)"/><circle cx="232.8" cy="114.7" r="7.3" fill="url(#petalP)"/><circle cx="242.4" cy="114.5" r="7.3" fill="url(#petalP)"/><circle cx="250.9" cy="118.8" r="7.3" fill="url(#petalP)"/><circle cx="256.5" cy="126.5" r="7.3" fill="url(#petalP)"/>
</g>
<g filter="url(#b1)"><circle cx="238" cy="134" r="15.120000000000001" fill="#c0106a"/></g>
<g filter="url(#b1)">
<circle cx="245.7" cy="139.1" r="5.9" fill="#f07cbc"/>
<circle cx="241.0" cy="144.2" r="5.9" fill="#f07cbc"/>
<circle cx="233.9" cy="143.7" r="5.9" fill="#f07cbc"/>
<circle cx="230.0" cy="137.9" r="5.9" fill="#f07cbc"/>
<circle cx="232.1" cy="131.2" r="5.9" fill="#f07cbc"/>
<circle cx="238.6" cy="128.6" r="5.9" fill="#f07cbc"/>
<circle cx="244.7" cy="132.1" r="5.9" fill="#f07cbc"/>
</g>
<g filter="url(#b2)"><circle cx="239.35" cy="137.24" r="7.5600000000000005" fill="#fff4fa"/></g>
<g filter="url(#b1)" fill="none" stroke="#c0106a" stroke-width="1.8" opacity="0.9"><path d="M224.5 132.65 C225.85 147.5 246.1 148.85 251.5 136.7"/></g>
<g filter="url(#b1)">
<circle cx="413" cy="54" r="19.200000000000003" fill="#f2b4d8"/>
<circle cx="430.7" cy="55.8" r="6.5" fill="url(#petalP)"/><circle cx="427.8" cy="63.8" r="6.5" fill="url(#petalP)"/><circle cx="421.6" cy="69.6" r="6.5" fill="url(#petalP)"/><circle cx="413.4" cy="71.8" r="6.5" fill="url(#petalP)"/><circle cx="405.1" cy="69.9" r="6.5" fill="url(#petalP)"/><circle cx="398.6" cy="64.4" r="6.5" fill="url(#petalP)"/><circle cx="395.4" cy="56.5" r="6.5" fill="url(#petalP)"/><circle cx="396.3" cy="48.0" r="6.5" fill="url(#petalP)"/><circle cx="400.9" cy="41.0" r="6.5" fill="url(#petalP)"/><circle cx="408.4" cy="36.8" r="6.5" fill="url(#petalP)"/><circle cx="416.9" cy="36.7" r="6.5" fill="url(#petalP)"/><circle cx="424.5" cy="40.5" r="6.5" fill="url(#petalP)"/><circle cx="429.5" cy="47.4" r="6.5" fill="url(#petalP)"/>
</g>
<g filter="url(#b1)"><circle cx="413" cy="54" r="13.440000000000001" fill="#a80e58"/></g>
<g filter="url(#b1)">
<circle cx="419.9" cy="58.5" r="5.3" fill="#f07cbc"/>
<circle cx="415.6" cy="63.1" r="5.3" fill="#f07cbc"/>
<circle cx="409.4" cy="62.6" r="5.3" fill="#f07cbc"/>
<circle cx="405.9" cy="57.5" r="5.3" fill="#f07cbc"/>
<circle cx="407.7" cy="51.5" r="5.3" fill="#f07cbc"/>
<circle cx="413.5" cy="49.2" r="5.3" fill="#f07cbc"/>
<circle cx="419.0" cy="52.3" r="5.3" fill="#f07cbc"/>
</g>
<g filter="url(#b2)"><circle cx="414.2" cy="56.88" r="4.32" fill="#fff4fa"/></g>
<g filter="url(#b1)" fill="none" stroke="#a80e58" stroke-width="1.8" opacity="0.9"><path d="M401.0 52.8 C402.2 66.0 420.2 67.2 425.0 56.4"/></g>
<g filter="url(#b1)">
<ellipse cx="153" cy="285" rx="24.64" ry="38.7" fill="#f4d6ea"/>
<circle cx="169.5" cy="290.6" r="12.6" fill="url(#petalW2)"/>
<circle cx="163.5" cy="306.9" r="12.6" fill="url(#petalW2)"/>
<circle cx="152.6" cy="312.9" r="12.6" fill="url(#petalW2)"/>
<circle cx="141.9" cy="305.9" r="12.6" fill="url(#petalW2)"/>
<circle cx="136.4" cy="289.2" r="12.6" fill="url(#petalW2)"/>
<circle cx="138.7" cy="270.4" r="12.6" fill="url(#petalW2)"/>
<circle cx="147.7" cy="258.5" r="12.6" fill="url(#petalW2)"/>
<circle cx="159.1" cy="259.0" r="12.6" fill="url(#petalW2)"/>
<circle cx="167.8" cy="271.6" r="12.6" fill="url(#petalW2)"/>
</g>
<g filter="url(#b2)">
<ellipse cx="155.8" cy="291.45" rx="16.8" ry="21.5" fill="#f6eef4"/>
<ellipse cx="150.2" cy="272.1" rx="15.400000000000002" ry="12.040000000000001" fill="#f090cc" opacity="0.85"/>
</g>
<g filter="url(#b1)" fill="none" stroke="#d01c70" stroke-width="1.3" opacity="0.85">
<path d="M133.4 272.1 C141.8 263.5 153 263.5 167.0 269.95"/>
<path d="M132.0 287.15 C139.0 278.55 147.4 276.4 158.6 280.7"/>
<path d="M150.2 317.25 C158.6 310.8 167.0 308.65 175.4 302.2"/>
</g>
<g filter="url(#b1)">
<ellipse cx="396" cy="338" rx="25.52" ry="26.1" fill="#f4d6ea"/>
<circle cx="413.1" cy="341.7" r="13.1" fill="url(#petalW2)"/>
<circle cx="406.8" cy="352.7" r="13.1" fill="url(#petalW2)"/>
<circle cx="395.6" cy="356.8" r="13.1" fill="url(#petalW2)"/>
<circle cx="384.5" cy="352.1" r="13.1" fill="url(#petalW2)"/>
<circle cx="378.8" cy="340.8" r="13.1" fill="url(#petalW2)"/>
<circle cx="381.2" cy="328.2" r="13.1" fill="url(#petalW2)"/>
<circle cx="390.5" cy="320.1" r="13.1" fill="url(#petalW2)"/>
<circle cx="402.4" cy="320.5" r="13.1" fill="url(#petalW2)"/>
<circle cx="411.3" cy="329.0" r="13.1" fill="url(#petalW2)"/>
</g>
<g filter="url(#b2)">
<ellipse cx="398.9" cy="342.35" rx="17.4" ry="14.5" fill="#f6eef4"/>
<ellipse cx="393.1" cy="329.3" rx="15.950000000000001" ry="8.120000000000001" fill="#f090cc" opacity="0.85"/>
</g>
<g filter="url(#b1)" fill="none" stroke="#d01c70" stroke-width="1.3" opacity="0.85">
<path d="M375.7 329.3 C384.4 323.5 396 323.5 410.5 327.85"/>
<path d="M374.25 339.45 C381.5 333.65 390.2 332.2 401.8 335.1"/>
<path d="M393.1 359.75 C401.8 355.4 410.5 353.95 419.2 349.6"/>
</g>
</svg></div>
<div id="tb" class="abs">
<div class="btn" style="left:25px;top:5px;width:134px;height:28px"></div>
<div class="btn" style="left:169px;top:5px;width:175px;height:28px"></div>
<div class="btn" style="left:354px;top:5px;width:129px;height:28px"></div>
<div class="btxt" style="left:61.8px;top:12.5px;transform:scaleX(0.94)">Select subject</div>
<div class="btxt" style="left:206.5px;top:12.5px;transform:scaleX(0.975)">Remove background</div>
<div class="btxt" style="left:391.8px;top:12.5px;transform:scaleX(0.975)">Adjust colors</div>
<svg class="abs" style="left:0;top:0" width="603" height="40" viewBox="169 651 603 40">
<g fill="#f2f2f2">
<rect x="173.5" y="656.6" width="6.6" height="2.7" rx="1.3"/>
<rect x="173.5" y="661.6" width="6.6" height="2.7" rx="1.3"/>
<rect x="173.5" y="666.6" width="6.6" height="2.7" rx="1.3"/>
<rect x="173.5" y="671.6" width="6.6" height="2.7" rx="1.3"/>
<rect x="173.5" y="676.6" width="6.6" height="2.7" rx="1.3"/>
<rect x="173.5" y="681.7" width="6.6" height="2.7" rx="1.3"/>
</g>
<!-- select subject icon -->
<g fill="#eeeeee">
<ellipse cx="212.4" cy="668.7" rx="3.1" ry="4"/>
<path d="M210.6 672 L214.2 672 L214.6 673.4 C218 674 219.2 676 219.4 678.2 L205.4 678.2 C205.6 676 206.8 674 210.2 673.4 Z"/>
<circle cx="212.4" cy="662.2" r="1.05"/>
<circle cx="209" cy="663.4" r="1.05"/>
<circle cx="215.8" cy="663.4" r="1.05"/>
<circle cx="207.3" cy="666" r="1.05"/>
<circle cx="217.5" cy="666" r="1.05"/>
<circle cx="206.9" cy="669.4" r="1.05"/>
<circle cx="217.8" cy="669.4" r="1.05"/>
<circle cx="207.3" cy="672.3" r="1.05"/>
<circle cx="217.4" cy="672.3" r="1.05"/>
<circle cx="204.6" cy="674.4" r="1.05"/>
<circle cx="220.3" cy="674.4" r="1.05"/>
<circle cx="203.4" cy="677.3" r="1.05"/>
<circle cx="221.4" cy="677.3" r="1.05"/>
</g>
<!-- remove background icon -->
<rect x="347.6" y="663.2" width="17" height="13.2" fill="#b4b4b4" stroke="#f2f2f2" stroke-width="1"/>
<g fill="#404040">
<rect x="350.8" y="664" width="2.4" height="2.7"/>
<rect x="357.5" y="664" width="2.4" height="2.7"/>
<rect x="348.4" y="667.4" width="2.2" height="2.8"/>
<rect x="354.2" y="667.4" width="2.4" height="2.8"/>
<rect x="361.2" y="667.8" width="2.4" height="2.6"/>
</g>
<path d="M347.6 672.2 L352.5 668.8 L357.6 673.3 L362 670 L364.6 672.5 L364.6 676.4 L347.6 676.4 Z" fill="#f0f0f0"/>
<!-- adjust colors icon -->
<circle cx="536.1" cy="667" r="3.7" fill="#b0b0b0" stroke="#e6e6e6" stroke-width="0.9"/>
<circle cx="546.2" cy="667" r="4.1" fill="#eeeeee"/>
<line x1="532" y1="675.3" x2="537.1" y2="675.3" stroke="#e6e6e6" stroke-width="1"/>
<line x1="541.3" y1="675.3" x2="550" y2="675.3" stroke="#e6e6e6" stroke-width="1"/>
<circle cx="539.2" cy="675.3" r="2.1" fill="none" stroke="#e6e6e6" stroke-width="1"/>
<!-- transform icon (disabled) -->
<g stroke="#727272" stroke-width="1.6" fill="none">
<path d="M670.6 662.1 L680.5 665.2 L684.1 675.3 L668.3 677.9 Z"/>
</g>
<g fill="#727272">
<circle cx="670.6" cy="662.1" r="1.9"/>
<circle cx="680.5" cy="665.2" r="1.9"/>
<circle cx="684.1" cy="675.3" r="1.9"/>
<circle cx="668.3" cy="677.9" r="1.9"/>
</g>
<!-- contrast icon -->
<circle cx="713.6" cy="670.2" r="7" fill="#505050" stroke="#f0f0f0" stroke-width="1.2"/>
<path d="M718.55 665.25 A7 7 0 0 1 708.65 675.15 Z" fill="#f0f0f0"/>
<!-- more -->
<g fill="#f0f0f0">
<circle cx="744.1" cy="670.2" r="2.1"/>
<circle cx="750.9" cy="670.2" r="2.1"/>
<circle cx="757.7" cy="670.2" r="2.1"/>
</g>
</svg>

</div>
</body></html>
